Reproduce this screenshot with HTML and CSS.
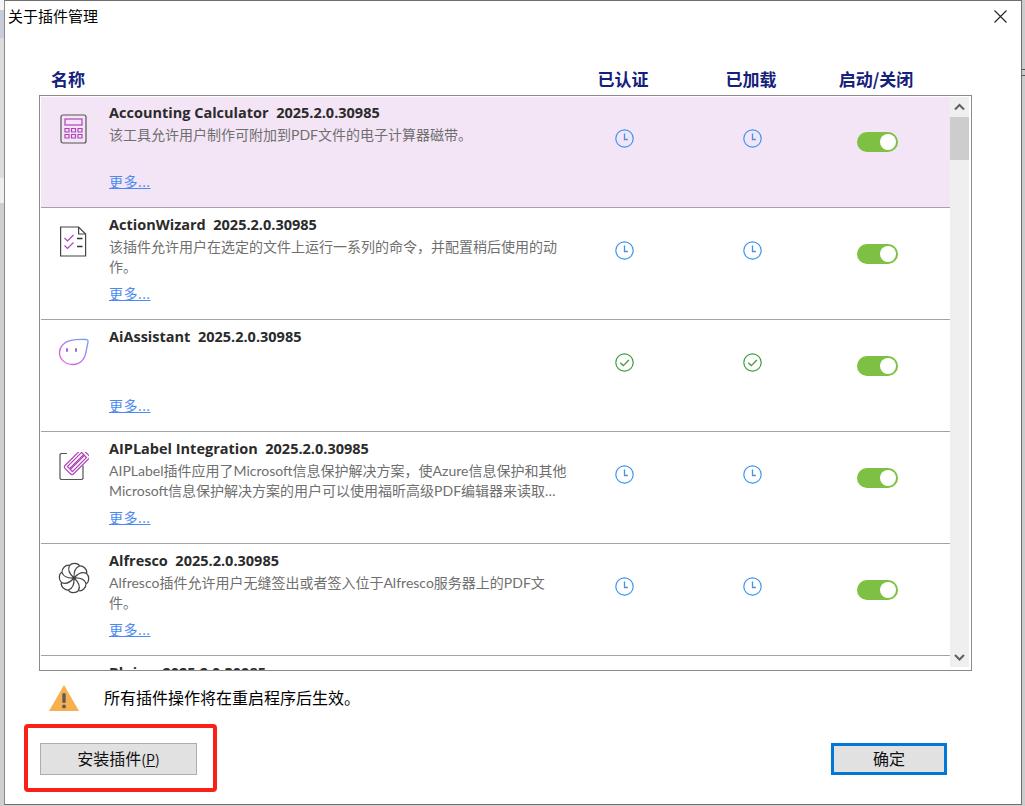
FILE: index.html
```html
<!DOCTYPE html>
<html lang="zh-CN">
<head>
    <meta charset="UTF-8">
    <meta name="viewport" content="width=device-width, initial-scale=1.0">
    <title>关于插件管理</title>
    <link rel="stylesheet" href="styles.css">
</head>
<body>

    <svg class="defs" width="0" height="0">
        <symbol id="clock" viewBox="0 0 19 19">
            <circle cx="9.5" cy="9.5" r="8.7" fill="none" stroke="#3d96ee" stroke-width="1.2"/>
            <path d="M9.5 4.500v6h3.400" fill="none" stroke="#3d96ee" stroke-width="1.3"/>
        </symbol>
        <symbol id="check" viewBox="0 0 19 19">
            <circle cx="9.5" cy="9.5" r="8.7" fill="none" stroke="#3f9e3f" stroke-width="1.2"/>
            <path d="M5.300 9.800l3 2.800 5.600-5.600" fill="none" stroke="#3f9e3f" stroke-width="1.3"/>
        </symbol>
    </svg>

    <div class="dialog">
        <div class="titlebar">
            <span class="title">关于插件管理</span>
            <svg class="close" width="13" height="13" viewBox="0 0 13 13">
                <path d="M.5.5l12 12M12.500.5l-12 12" stroke="#222" stroke-width="1.1" fill="none"/>
            </svg>
        </div>

        <div class="columns">
            <div class="col-name">名称</div>
            <div class="col-head">已认证</div>
            <div class="col-head">已加载</div>
            <div class="col-head">启动/关闭</div>
        </div>

        <div class="list">
            <div class="rows">

                <div class="row selected">
                    <div class="row-icon">
                        <svg width="28" height="30" viewBox="0 0 28 30">
                            <rect x="1" y="1" width="25" height="28" rx="2" fill="none" stroke="#555" stroke-width="1.2"/>
                            <rect x="5" y="5" width="17" height="6" fill="none" stroke="#b143b8" stroke-width="1.2"/>
                            <path d="M5 14.500h4v3.500h-4zM11.500 14.500h4v3.500h-4zM18 14.500h4v3.500h-4zM5 20.500h4v3.500h-4zM11.500 20.500h4v3.500h-4zM18 20.500h4v3.500h-4z" fill="none" stroke="#b143b8" stroke-width="1.2"/>
                        </svg>
                    </div>
                    <div class="row-text">
                        <div class="name">Accounting Calculator&nbsp; 2025.2.0.30985</div>
                        <div class="desc">该工具允许用户制作可附加到PDF文件的电子计算器磁带。</div>
                        <a class="more">更多...</a>
                    </div>
                    <div class="status"><svg width="19" height="19"><use href="#clock"/></svg></div>
                    <div class="status"><svg width="19" height="19"><use href="#clock"/></svg></div>
                    <div class="status"><span class="toggle"></span></div>
                </div>

                <div class="row">
                    <div class="row-icon">
                        <svg width="28" height="31" viewBox="0 0 28 31">
                            <path d="M.6 1h18l7 7v22h-25z" fill="none" stroke="#444" stroke-width="1.2"/>
                            <path d="M18.600 1v7h7" fill="none" stroke="#444" stroke-width="1.2"/>
                            <path d="M4.500 12l3 3 6-6M4.500 19.500l3 3 6-6" fill="none" stroke="#b143b8" stroke-width="1.2"/>
                            <path d="M17 12.500h5.500M17 20.500h5.500" stroke="#333" stroke-width="1.3"/>
                        </svg>
                    </div>
                    <div class="row-text">
                        <div class="name">ActionWizard&nbsp; 2025.2.0.30985</div>
                        <div class="desc">该插件允许用户在选定的文件上运行一系列的命令，并配置稍后使用的动作。</div>
                        <a class="more">更多...</a>
                    </div>
                    <div class="status"><svg width="19" height="19"><use href="#clock"/></svg></div>
                    <div class="status"><svg width="19" height="19"><use href="#clock"/></svg></div>
                    <div class="status"><span class="toggle"></span></div>
                </div>

                <div class="row">
                    <div class="row-icon">
                        <svg width="31" height="28" viewBox="0 0 31 28">
                            <defs>
                                <linearGradient id="ai" x1="1" y1="0" x2="0" y2="1">
                                    <stop offset="0" stop-color="#6aa8f5"/>
                                    <stop offset=".7" stop-color="#d060e8"/>
                                    <stop offset="1" stop-color="#e45fe0"/>
                                </linearGradient>
                            </defs>
                            <path d="M13 2.300c5-1 10-1 15-.8 1.500 0 2.300 1 2 2.500l-2 10c-1.500 8-6.500 12.500-13 12.500-7.500 0-13.500-5-13.500-12 0-6 5-11 11.500-12.200z" fill="none" stroke="url(#ai)" stroke-width="1.3"/>
                            <rect x="8" y="10" width="2" height="4" rx="1" fill="#a860e8"/>
                            <rect x="17" y="10" width="2" height="4" rx="1" fill="#a860e8"/>
                        </svg>
                    </div>
                    <div class="row-text">
                        <div class="name">AiAssistant&nbsp; 2025.2.0.30985</div>
                        <div class="desc"></div>
                        <a class="more">更多...</a>
                    </div>
                    <div class="status"><svg width="19" height="19"><use href="#check"/></svg></div>
                    <div class="status"><svg width="19" height="19"><use href="#check"/></svg></div>
                    <div class="status"><span class="toggle"></span></div>
                </div>

                <div class="row">
                    <div class="row-icon">
                        <svg class="icon-label" width="30" height="30" viewBox="0 0 30 30">
                            <path d="M8 1.500h-6l-1 1v24l1 1h21l1-1v-13" fill="none" stroke="#555" stroke-width="1.2"/>
                            <g transform="rotate(-45 18 10)" fill="none" stroke="#b143b8" stroke-width="1.2">
                                <rect x="5" y="4" width="26" height="12" rx="2" fill="#fff"/>
                                <rect x="8" y="6.500" width="20" height="3"/>
                                <rect x="8" y="10.500" width="20" height="3"/>
                            </g>
                        </svg>
                    </div>
                    <div class="row-text">
                        <div class="name">AIPLabel Integration&nbsp; 2025.2.0.30985</div>
                        <div class="desc clamp">AIPLabel插件应用了Microsoft信息保护解决方案，使Azure信息保护和其他Microsoft信息保护解决方案的用户可以使用福昕高级PDF编辑器来读取和编辑受保护的文件。</div>
                        <a class="more">更多...</a>
                    </div>
                    <div class="status"><svg width="19" height="19"><use href="#clock"/></svg></div>
                    <div class="status"><svg width="19" height="19"><use href="#clock"/></svg></div>
                    <div class="status"><span class="toggle"></span></div>
                </div>

                <div class="row">
                    <div class="row-icon">
                        <svg width="32" height="32" viewBox="0 0 32 32" fill="none" stroke="#444" stroke-width="1.2">
                            <circle cx="16" cy="16" r="1.200" fill="#444"/>
                            <path id="petal" d="M16 16C11.500 12 9.500 7.500 11.500 3.500C14 .5 20 .5 21.700 4"/>
                            <use href="#petal" transform="rotate(45 16 16)"/>
                            <use href="#petal" transform="rotate(90 16 16)"/>
                            <use href="#petal" transform="rotate(135 16 16)"/>
                            <use href="#petal" transform="rotate(180 16 16)"/>
                            <use href="#petal" transform="rotate(225 16 16)"/>
                            <use href="#petal" transform="rotate(270 16 16)"/>
                            <use href="#petal" transform="rotate(315 16 16)"/>
                        </svg>
                    </div>
                    <div class="row-text">
                        <div class="name">Alfresco&nbsp; 2025.2.0.30985</div>
                        <div class="desc">Alfresco插件允许用户无缝签出或者签入位于Alfresco服务器上的PDF文件。</div>
                        <a class="more">更多...</a>
                    </div>
                    <div class="status"><svg width="19" height="19"><use href="#clock"/></svg></div>
                    <div class="status"><svg width="19" height="19"><use href="#clock"/></svg></div>
                    <div class="status"><span class="toggle"></span></div>
                </div>

                <div class="row">
                    <div class="row-icon"></div>
                    <div class="row-text">
                        <div class="name">Bluing&nbsp; 2025.2.0.30985</div>
                    </div>
                </div>

            </div>

            <div class="scrollbar">
                <svg class="arrow" width="19" height="20" viewBox="0 0 19 20">
                    <path d="M5 12.500l4.500-4.500 4.500 4.500" fill="none" stroke="#606060" stroke-width="2"/>
                </svg>
                <div class="track"><div class="thumb"></div></div>
                <svg class="arrow" width="19" height="20" viewBox="0 0 19 20">
                    <path d="M5 8l4.500 4.500 4.500-4.500" fill="none" stroke="#606060" stroke-width="2"/>
                </svg>
            </div>
        </div>

        <div class="notice">
            <svg width="30" height="26" viewBox="0 0 30 26">
                <path d="M15 0l15 26h-30z" fill="#f8b04e"/>
                <rect x="13.300" y="8" width="3.400" height="10" rx="1.500" fill="#5c5c5c"/>
                <circle cx="15" cy="21.500" r="1.900" fill="#5c5c5c"/>
            </svg>
            <span class="notice-text">所有插件操作将在重启程序后生效。</span>
        </div>

        <div class="footer">
            <button class="btn" type="button">安装插件<span class="key">(<u>P</u>)</span></button>
            <button class="btn btn-default" type="button">确定</button>
        </div>

        <div class="mark"></div>
    </div>

</body>
</html>
```

FILE: styles.css
```css
body {
    margin: 0;
    width: 1025px;
    height: 806px;
    overflow: hidden;
    background-color: #d2d2d2;
    background-image:
        linear-gradient(to bottom, #f4f4f4 0 10px, #c8ccd8 10px 38px, #dcdcdc 38px 178px, #eeeeee 178px 203px, #cfcfcf 203px),
        linear-gradient(to bottom, #cccccc 0 69px, #555555 69px 70px, #cccccc 70px 75px, #555555 75px 76px, #cccccc 76px);
    background-size: 4px 100%, 3px 100%;
    background-position: left top, right top;
    background-repeat: no-repeat;
    font-family: "Open Sans", "Noto Sans CJK SC", sans-serif;
    color: #000000;
}

.defs {
    position: absolute;
}

.dialog {
    position: relative;
    box-sizing: border-box;
    width: 1018px;
    height: 805px;
    margin-left: 4px;
    padding: 0 0 0 34px;
    border: 1px solid #6e6e6e;
    border-left-color: #8a8a8a;
    background-color: #ffffff;
}

.titlebar {
    display: flex;
    justify-content: space-between;
    align-items: center;
    height: 29px;
    margin-left: -31px;
    padding-right: 14px;
}

.title {
    font-size: 15px;
}

.close {
    align-self: flex-start;
    margin-top: 9px;
}

.columns {
    display: grid;
    grid-template-columns: 509px 128px 128px 122px;
    align-items: center;
    height: 24px;
    margin-top: 36px;
    margin-left: 11px;
    margin-bottom: 5px;
    color: #14207a;
    font-size: 17px;
    font-weight: 700;
    font-family: "Noto Sans CJK SC", sans-serif;
}

.col-name {
    padding-left: 1px;
}

.col-head {
    text-align: center;
}

.list {
    display: flex;
    box-sizing: border-box;
    width: 933px;
    height: 576px;
    border: 1px solid #8b8b8b;
    overflow: hidden;
}

.rows {
    flex: 1;
    padding-left: 1px;
    overflow: hidden;
}

.row {
    display: grid;
    grid-template-columns: 68px 451px 128px 128px 122px;
    box-sizing: border-box;
    height: 112px;
    border-bottom: 1px solid #a3a3a3;
}

.row.selected {
    background-color: #f3e5f5;
    box-shadow: inset 0 1px 0 #ffffff;
}

.row-icon {
    display: flex;
    justify-content: center;
    padding-top: 18px;
    padding-right: 3px;
}

.icon-label {
    margin-top: 2px;
}

.row-text {
    display: flex;
    flex-direction: column;
    padding-top: 7px;
}

.name {
    color: #2b2b2b;
    font-size: 14.5px;
    font-weight: 700;
    line-height: 20px;
}

.desc {
    width: 462px;
    height: 40px;
    margin-top: 2px;
    color: #6f6f6f;
    font-family: Lato, "Noto Sans CJK SC", sans-serif;
    font-size: 14px;
    line-height: 20px;
}

.clamp {
    display: -webkit-box;
    width: 458px;
    -webkit-line-clamp: 2;
    -webkit-box-orient: vertical;
    overflow: hidden;
}

.more {
    margin-top: 6px;
    align-self: flex-start;
    color: #4a8af0;
    font-size: 14px;
    letter-spacing: .5px;
    text-decoration: underline;
}

.status {
    display: flex;
    justify-content: center;
    padding-top: 33px;
}

.toggle {
    position: relative;
    display: block;
    width: 41px;
    height: 20px;
    margin-top: 3px;
    border-radius: 10px;
    background-color: #7dc044;
}

.toggle::after {
    content: "";
    position: absolute;
    top: 2px;
    right: 2px;
    width: 16px;
    height: 16px;
    border-radius: 50%;
    background-color: #ffffff;
}

.scrollbar {
    display: flex;
    flex-direction: column;
    width: 19px;
    margin: 1px 2px 3px 0;
    background-color: #efefef;
}

.track {
    flex: 1;
}

.thumb {
    width: 19px;
    height: 43px;
    background-color: #cdcdcd;
}

.notice {
    display: flex;
    align-items: center;
    gap: 25px;
    margin-top: 14px;
    margin-left: 10px;
    font-size: 16px;
    font-family: "Noto Sans CJK SC", sans-serif;
}

.notice-text {
    margin-bottom: 2px;
}

.footer {
    display: flex;
    justify-content: space-between;
    width: 907px;
    margin-top: 32px;
    margin-left: 1px;
}

.btn {
    box-sizing: border-box;
    width: 157px;
    height: 32px;
    padding: 0 0 2px;
    border: 1px solid #adadad;
    background-color: #e1e1e1;
    color: #111111;
    font-size: 16px;
    font-family: "Noto Sans CJK SC", sans-serif;
}

.key {
    font-size: 14px;
}

.btn-default {
    width: 116px;
    border: 3px solid #0078d7;
}

.mark {
    position: absolute;
    left: 19px;
    top: 723px;
    box-sizing: border-box;
    width: 193px;
    height: 68px;
    border: 4px solid #fb2016;
    border-radius: 4px;
}
```
